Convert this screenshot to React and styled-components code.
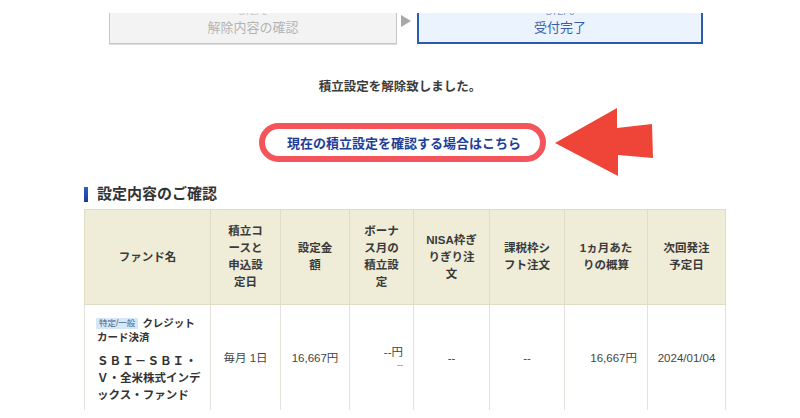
import React from 'react';
import styled, { createGlobalStyle } from 'styled-components';

const GlobalStyle = createGlobalStyle`
  html, body {
    margin: 0;
    padding: 0;
    background: #fff;
  }
  body {
    font-family: "Liberation Sans", "Noto Sans CJK JP", sans-serif;
    color: #333;
  }
`;

const Page = styled.div`
  position: relative;
  width: 800px;
  height: 418px;
  overflow: hidden;
`;

const Content = styled.div`
  width: 641px;
  margin-left: 84px;
  padding-top: 13px;
`;

const StepRow = styled.div`
  display: flex;
  align-items: flex-start;
  padding: 0 22px 0 25px;
`;

const Step = styled.div`
  flex: 0 0 ${p => (p.$active ? '286px' : '288px')};
  height: 31px;
  box-sizing: border-box;
  display: flex;
  flex-direction: column;
  align-items: center;
  overflow: hidden;
  background: ${p => (p.$active ? '#eaf3fe' : '#f3f3f3')};
  border: ${p => (p.$active ? '2px solid #2c59b1' : '1px solid #c6c6c6')};
  border-top: none;
  box-shadow: ${p => (p.$active ? 'none' : '0 1px 0 #dedede')};
`;

const StepLabel = styled.span`
  font-size: 9px;
  line-height: 9px;
  margin-top: -5px;
  color: ${p => (p.$active ? '#7d95c6' : '#c8c8c8')};
`;

const StepTitle = styled.span`
  font-size: 13px;
  line-height: 18px;
  margin-top: 2px;
  color: ${p => (p.$active ? '#3a5ca6' : '#b3b3b3')};
`;

const StepArrow = styled.span`
  width: 0;
  height: 0;
  margin: 2px 6px 0 4px;
  border-left: 10px solid #a8a8a8;
  border-top: 6px solid transparent;
  border-bottom: 6px solid transparent;
`;

const Message = styled.p`
  margin: 33px 9px 0 0;
  text-align: center;
  font-size: 12.5px;
  line-height: 20px;
  font-weight: bold;
  color: #3c3c3c;
`;

const LinkRow = styled.div`
  display: flex;
  margin-top: 26px;
  padding-left: 175px;
`;

const LinkPill = styled.a`
  width: 287px;
  height: 39px;
  box-sizing: border-box;
  display: flex;
  align-items: center;
  justify-content: center;
  border: 6px solid #f3555a;
  border-radius: 20px;
  background: #fff;
  color: #1d3e98;
  font-size: 13px;
  font-weight: bold;
  text-decoration: none;
  padding-left: 3px;
`;

const Heading = styled.h2`
  display: flex;
  align-items: center;
  margin: 22px 0 0;
  font-size: 15px;
  line-height: 20px;
  font-weight: bold;
  color: #333;

  &::before {
    content: '';
    width: 4px;
    height: 15px;
    margin-right: 9px;
    background: linear-gradient(#2c5fc0, #163f94);
  }
`;

const Table = styled.table`
  margin-top: 5px;
  width: 641px;
  table-layout: fixed;
  border-collapse: collapse;
`;

const Th = styled.th`
  height: 94px;
  padding: 0;
  background: #efecd8;
  border: 1px solid #e0ddc7;
  font-size: 11.5px;
  line-height: 17px;
  font-weight: bold;
  color: #3a3a3a;
  text-align: center;
  vertical-align: middle;
`;

const Td = styled.td`
  height: 105px;
  padding: 0 ${p => (p.$align === 'right' ? '10px' : '2px')} 0 2px;
  border: 1px solid #e3e3dc;
  border-bottom: none;
  font-size: 11.5px;
  line-height: 14px;
  color: #444;
  text-align: ${p => p.$align || 'center'};
  vertical-align: middle;
`;

const FundCell = styled.td`
  height: 105px;
  box-sizing: border-box;
  padding: 12px 6px 6px 12px;
  border: 1px solid #e3e3dc;
  border-bottom: none;
  vertical-align: top;
  text-align: left;
`;

const PayLine = styled.div`
  font-size: 10.5px;
  line-height: 13.5px;
  font-weight: bold;
  color: #333;
`;

const Badge = styled.span`
  display: inline-block;
  margin: 0 4px 0 -1px;
  padding: 0 3px;
  background: #d4e7fb;
  font-size: 8.5px;
  line-height: 11px;
  font-weight: normal;
  color: #4a5f80;
  vertical-align: 1px;
`;

const FundName = styled.div`
  margin-top: 9px;
  font-size: 11.5px;
  line-height: 17px;
  font-weight: bold;
  color: #333;
`;

const Spaced = styled.span`
  letter-spacing: 1.1px;
`;

const SubValue = styled.div`
  font-size: 9px;
  line-height: 12px;
  color: #777;
`;

const BigArrow = styled.svg`
  position: absolute;
  left: 555px;
  top: 108px;
  width: 100px;
  height: 70px;
`;

const widths = [126, 70, 69, 64, 76, 75, 83, 78];

const headers = [
  ['ファンド名'],
  ['積立コ', 'ースと', '申込設', '定日'],
  ['設定金', '額'],
  ['ボーナ', 'ス月の', '積立設', '定'],
  ['NISA枠ぎ', 'りぎり注', '文'],
  ['課税枠シ', 'フト注文'],
  ['1ヵ月あた', 'りの概算'],
  ['次回発注', '予定日'],
];

export default function App() {
  return (
    <Page>
      <GlobalStyle />
      <Content>
        <StepRow>
          <Step>
            <StepLabel>STEP2</StepLabel>
            <StepTitle>解除内容の確認</StepTitle>
          </Step>
          <StepArrow />
          <Step $active>
            <StepLabel $active>STEP3</StepLabel>
            <StepTitle $active>受付完了</StepTitle>
          </Step>
        </StepRow>

        <Message>積立設定を解除致しました。</Message>

        <LinkRow>
          <LinkPill href="#">現在の積立設定を確認する場合はこちら</LinkPill>
        </LinkRow>

        <Heading>設定内容のご確認</Heading>

        <Table>
          <colgroup>
            {widths.map((w, i) => (
              <col key={i} style={{ width: w }} />
            ))}
          </colgroup>
          <thead>
            <tr>
              {headers.map((lines, i) => (
                <Th key={i}>
                  {lines.map((l, j) => (
                    <React.Fragment key={j}>
                      {j > 0 && <br />}
                      {l}
                    </React.Fragment>
                  ))}
                </Th>
              ))}
            </tr>
          </thead>
          <tbody>
            <tr>
              <FundCell>
                <PayLine>
                  <Badge>特定/一般</Badge>クレジット
                  <br />
                  カード決済
                </PayLine>
                <FundName>
                  <Spaced>ＳＢＩ－ＳＢＩ・</Spaced>
                  <br />
                  Ｖ・全米株式インデ
                  <br />
                  ックス・ファンド
                </FundName>
              </FundCell>
              <Td>毎月 1日</Td>
              <Td>16,667円</Td>
              <Td $align="right">
                --円
                <SubValue>--</SubValue>
              </Td>
              <Td>--</Td>
              <Td>--</Td>
              <Td $align="right">16,667円</Td>
              <Td>2024/01/04</Td>
            </tr>
          </tbody>
        </Table>
      </Content>

      <BigArrow viewBox="0 0 100 70">
        <polygon
          points="0,35 62,0 62,20 97,16 98,50 63,47 63,68"
          fill="#ef4538"
        />
      </BigArrow>
    </Page>
  );
}
